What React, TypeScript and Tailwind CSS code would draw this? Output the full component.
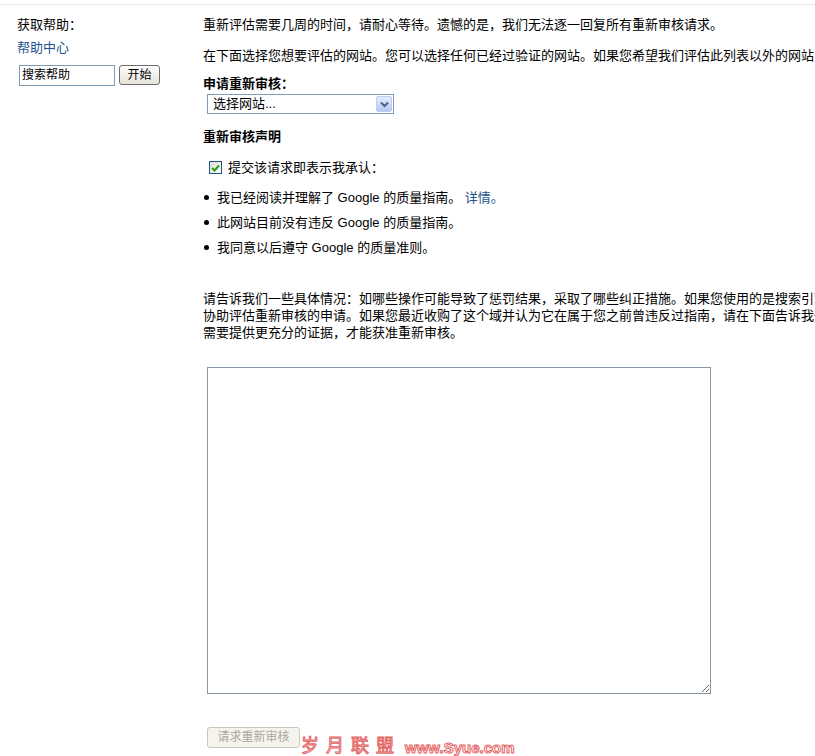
import React from "react";

const FONT = "font-['Liberation_Sans','Noto_Sans_CJK_SC',sans-serif]";

function Bullet({ children }: { children: React.ReactNode }) {
  return (
    <div className="flex items-center h-[17px] leading-[17px]">
      <span className="ml-[1px] w-[5px] h-[5px] rounded-full bg-black shrink-0" />
      <span className="ml-[8px] whitespace-nowrap">{children}</span>
    </div>
  );
}

export default function App() {
  return (
    <div className={`relative w-[815px] h-[756px] overflow-hidden bg-white text-black text-[13px] leading-[17px] ${FONT}`}>
      <div className="mt-[4px] border-t border-[#e6e6e6]" />
      <div className="flex">
        {/* Left column */}
        <div className="w-[203px] shrink-0 pl-[17px] pt-[11px]">
          <div className="h-[17px] whitespace-nowrap">获取帮助：</div>
          <div className="mt-[6px] h-[17px] text-[#23528c] whitespace-nowrap">帮助中心</div>
          <div className="mt-[9px] flex items-start">
            <div className="ml-[2px] w-[96px] h-[21px] border border-[#7f9db9] bg-white pl-[2px] text-[12px] leading-[19px] whitespace-nowrap">
              搜索帮助
            </div>
            <div className="ml-[4px] w-[41px] h-[20px] border border-[#6d6d6d] rounded-[3px] bg-gradient-to-b from-white to-[#e6e3d6] text-[12px] leading-[18px] text-center">
              开始
            </div>
          </div>
        </div>

        {/* Main column */}
        <div className="w-[1000px] shrink-0 pt-[11px]">
          <p className="h-[17px] whitespace-nowrap">
            重新评估需要几周的时间，请耐心等待。遗憾的是，我们无法逐一回复所有重新审核请求。
          </p>
          <p className="mt-[14px] h-[17px] whitespace-nowrap">
            在下面选择您想要评估的网站。您可以选择任何已经过验证的网站。如果您希望我们评估此列表以外的网站，请先添加并验证该网站。
          </p>
          <div className="mt-[11px] h-[17px] font-bold whitespace-nowrap">申请重新审核：</div>
          <div className="mt-[2px] ml-[4px] w-[187px] h-[20px] border border-[#7f9db9] bg-white flex items-center justify-between">
            <span className="pl-[5px] text-[13px] leading-[18px] whitespace-nowrap">选择网站...</span>
            <div className="mr-[1px] w-[16px] h-[16px] rounded-[2px] border border-[#bccbef] bg-gradient-to-b from-[#e4ecfd] to-[#b5c9f6] flex items-center justify-center">
              <svg width="9" height="7" viewBox="0 0 9 7">
                <path d="M1 1.5 L4.5 5 L8 1.5" fill="none" stroke="#4d6185" strokeWidth="2" />
              </svg>
            </div>
          </div>
          <div className="mt-[14px] h-[17px] font-bold whitespace-nowrap">重新审核声明</div>
          <div className="mt-[14px] h-[17px] flex items-center">
            <div className="ml-[6px] w-[13px] h-[13px] border border-[#1c5180] bg-gradient-to-br from-[#dcdcd7] to-white flex items-center justify-center">
              <svg width="9" height="8" viewBox="0 0 9 8">
                <path d="M1 4 L3.5 6.5 L8 1.5" fill="none" stroke="#21a121" strokeWidth="2" />
              </svg>
            </div>
            <span className="ml-[6px] whitespace-nowrap">提交该请求即表示我承认：</span>
          </div>
          <div className="mt-[13px] flex flex-col gap-[8px]">
            <Bullet>
              我已经阅读并理解了 Google 的质量指南。 <span className="text-[#23528c]">详情。</span>
            </Bullet>
            <Bullet>此网站目前没有违反 Google 的质量指南。</Bullet>
            <Bullet>我同意以后遵守 Google 的质量准则。</Bullet>
          </div>
          <div className="mt-[34px] whitespace-nowrap">
            <div className="h-[17px]">
              请告诉我们一些具体情况：如哪些操作可能导致了惩罚结果，采取了哪些纠正措施。如果您使用的是搜索引擎优化公司，请注明这一点，并说明他们如何
            </div>
            <div className="h-[17px]">
              协助评估重新审核的申请。如果您最近收购了这个域并认为它在属于您之前曾违反过指南，请在下面告诉我们。在这种情况下，我们可能
            </div>
            <div className="h-[17px]">需要提供更充分的证据，才能获准重新审核。</div>
          </div>
          <textarea
            className="block mt-[26px] ml-[4px] w-[504px] h-[327px] border border-[#8797a6] bg-white outline-none"
            defaultValue=""
          />
          <button
            disabled
            className="block mt-[33px] ml-[4px] w-[93px] h-[21px] border border-[#c9c7ba] rounded-[3px] bg-[#f4f3ee] text-[#aca899] text-[12px] leading-[19px] text-center whitespace-nowrap"
          >
            请求重新审核
          </button>
        </div>
      </div>

      {/* Watermark overlay */}
      <div className="absolute left-[301px] top-[735px] flex items-end whitespace-nowrap text-white [-webkit-text-stroke:1px_#e46464]">
        <span className="text-[18px] leading-[22px] tracking-[1px]">岁 月 联 盟</span>
        <span className="ml-[10px] text-[15px] leading-[18px] font-bold font-['Liberation_Sans',sans-serif]">www.Syue.com</span>
      </div>
    </div>
  );
}
